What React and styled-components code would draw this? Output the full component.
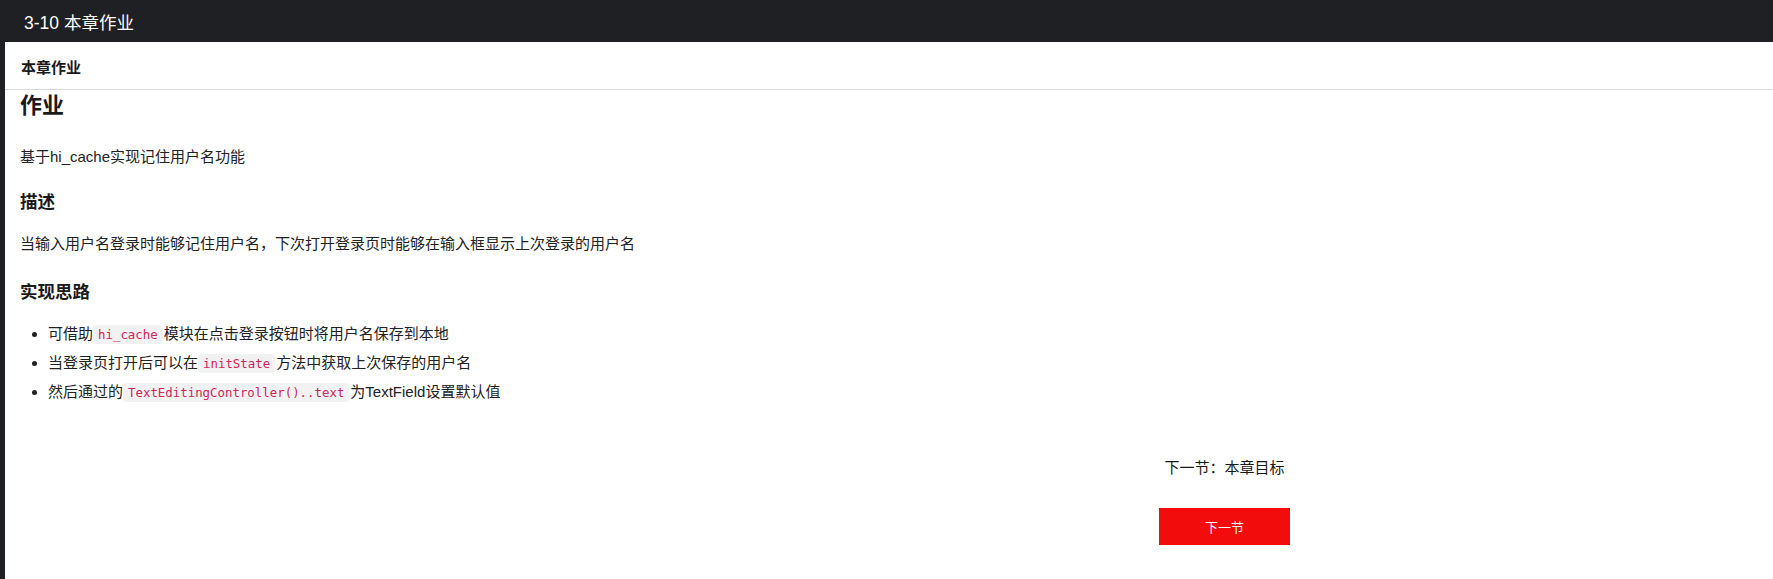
import React from "react";
import styled, { createGlobalStyle } from "styled-components";

const GlobalStyle = createGlobalStyle`
  html, body {
    margin: 0;
    padding: 0;
    background: #1f2023;
  }
  body {
    font-family: "Liberation Sans", "Noto Sans CJK SC", sans-serif;
  }
  * { box-sizing: border-box; }
`;

const Page = styled.div`
  min-height: 100vh;
  display: flex;
  flex-direction: column;
  background: #1f2023;
`;

const TopBar = styled.header`
  height: 42px;
  flex: 0 0 42px;
  display: flex;
  align-items: center;
  padding-left: 24px;
  color: #ffffff;
  font-size: 17.5px;
  font-family: "Liberation Sans", "Noto Sans CJK SC", sans-serif;
`;

const Main = styled.main`
  flex: 1;
  margin-left: 5px;
  background: #ffffff;
  display: flex;
  flex-direction: column;
`;

const SubHeader = styled.div`
  height: 48px;
  padding: 1px 0 0 16px;
  display: flex;
  align-items: center;
  border-bottom: 1px solid #d6d6d6;
  font-size: 15px;
  font-weight: bold;
  color: #1a1a1a;
`;

const Article = styled.article`
  padding: 0 15px 8px;
  color: #222222;
`;

const H2 = styled.h2`
  margin: 2px 0 25px;
  font-size: 22px;
  line-height: 28px;
  font-weight: bold;
  color: #1a1a1a;
`;

const H3 = styled.h3`
  margin: ${(p) => p.$mt || 0}px 0 18px;
  font-size: 17.5px;
  line-height: 24px;
  font-weight: bold;
  color: #1a1a1a;
`;

const P = styled.p`
  margin: 0;
  font-size: 15px;
  line-height: 24px;
`;

const List = styled.ul`
  margin: 0;
  padding-left: 28px;
  list-style: disc;
`;

const Item = styled.li`
  font-size: 15px;
  line-height: 24px;
  margin-bottom: 5px;
`;

const Code = styled.code`
  font-family: "DejaVu Sans Mono", "Liberation Mono", monospace;
  font-size: 12.4px;
  line-height: 15px;
  color: #d3245a;
  background: #f2f2f2;
  border-radius: 4px;
  padding: 2px 5px;
  margin: 0 1px 0 0;
`;

const Footer = styled.div`
  display: flex;
  padding-left: 1139px;
  margin-top: 52px;
`;

const NextNav = styled.nav`
  width: 131px;
  display: flex;
  flex-direction: column;
  align-items: center;
  gap: 28px;
`;

const NextLabel = styled.div`
  font-size: 15px;
  line-height: 24px;
  color: #1a1a1a;
  white-space: nowrap;
`;

const NextButton = styled.button`
  width: 131px;
  height: 37px;
  border: none;
  border-radius: 0;
  background: #f20c0c;
  color: #ffffff;
  font-family: "Liberation Sans", "Noto Sans CJK SC", sans-serif;
  font-size: 13px;
  cursor: pointer;
`;

export default function App() {
  return (
    <>
      <GlobalStyle />
      <Page>
        <TopBar>3-10 本章作业</TopBar>
        <Main>
          <SubHeader>本章作业</SubHeader>
          <Article>
            <H2>作业</H2>
            <P>基于hi_cache实现记住用户名功能</P>
            <H3 $mt={21}>描述</H3>
            <P>当输入用户名登录时能够记住用户名，下次打开登录页时能够在输入框显示上次登录的用户名</P>
            <H3 $mt={24}>实现思路</H3>
            <List>
              <Item>
                可借助<Code>hi_cache</Code>模块在点击登录按钮时将用户名保存到本地
              </Item>
              <Item>
                当登录页打开后可以在<Code>initState</Code>方法中获取上次保存的用户名
              </Item>
              <Item>
                然后通过的<Code>TextEditingController()..text</Code>为TextField设置默认值
              </Item>
            </List>
            <Footer>
              <NextNav>
                <NextLabel>下一节：本章目标</NextLabel>
                <NextButton>下一节</NextButton>
              </NextNav>
            </Footer>
          </Article>
        </Main>
      </Page>
    </>
  );
}
